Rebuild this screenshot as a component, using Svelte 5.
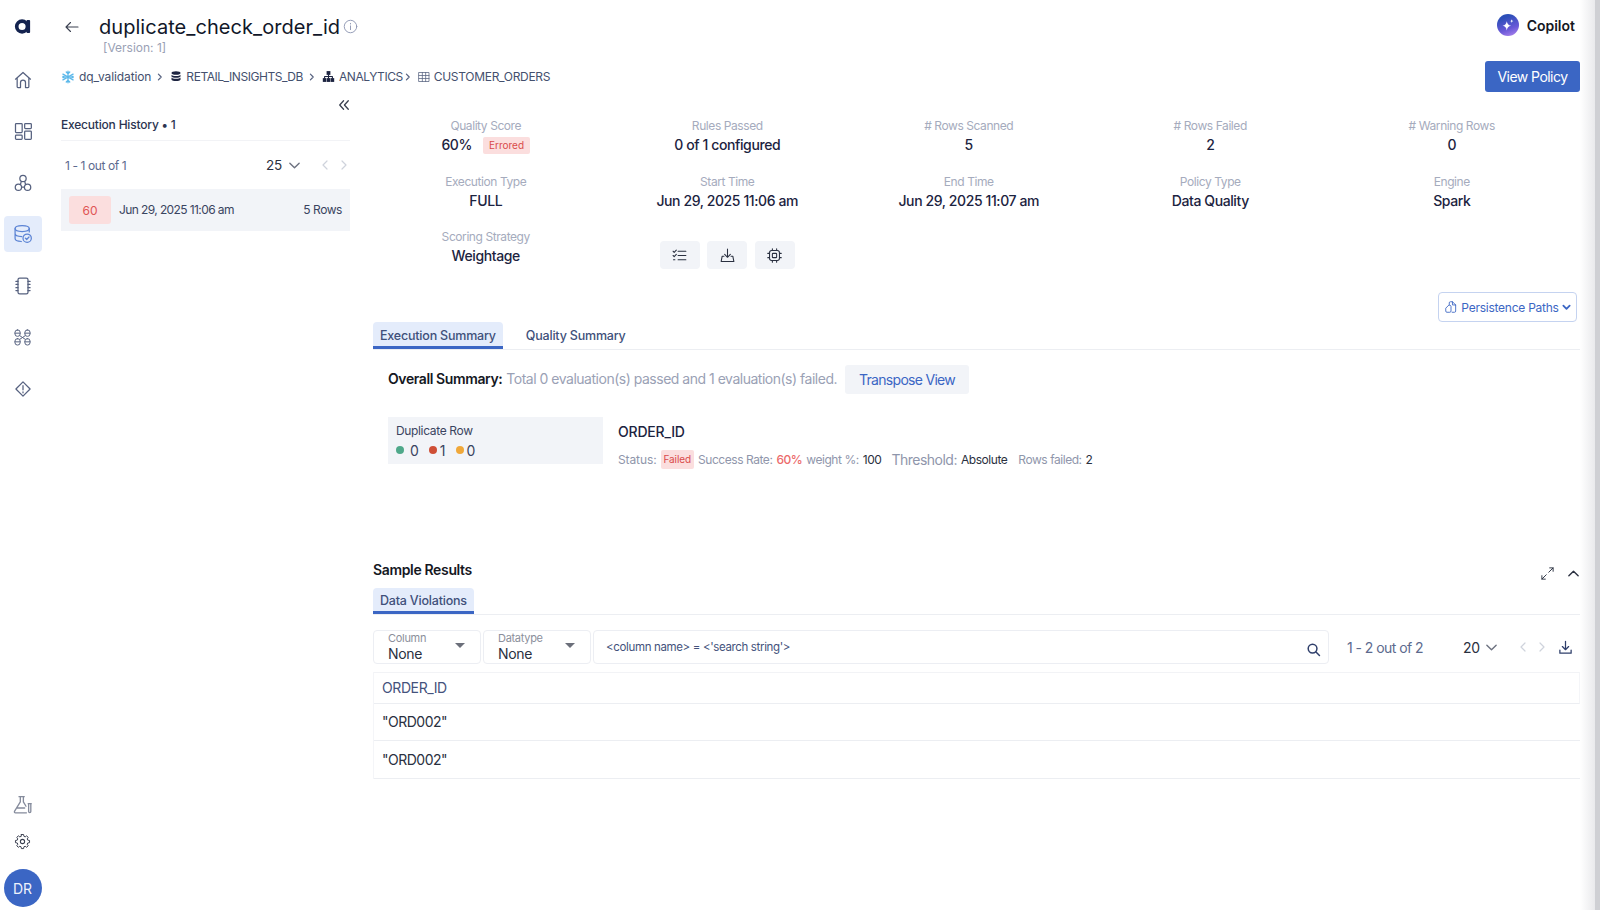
<script>
  const metrics = [
    { label: 'Quality Score', value: '60%', badge: 'Errored' },
    { label: 'Rules Passed', value: '0 of 1 configured' },
    { label: '# Rows Scanned', value: '5' },
    { label: '# Rows Failed', value: '2' },
    { label: '# Warning Rows', value: '0' },
    { label: 'Execution Type', value: 'FULL' },
    { label: 'Start Time', value: 'Jun 29, 2025 11:06 am' },
    { label: 'End Time', value: 'Jun 29, 2025 11:07 am' },
    { label: 'Policy Type', value: 'Data Quality' },
    { label: 'Engine', value: 'Spark' },
    { label: 'Scoring Strategy', value: 'Weightage' }
  ]
  const rows = ['"ORD002"', '"ORD002"']
</script>

<div class="app">
  <nav class="rail">
    <div class="logo">
      <svg viewBox="0.4 0 15 14" width="17" height="15"><circle cx="7.5" cy="7" r="5" fill="none" stroke="#14234f" stroke-width="3.4"/><rect x="11.6" y="1" width="3.4" height="12" rx="0.8" fill="#14234f"/></svg>
    </div>
    <div class="item">
      <svg viewBox="0 0 24 24" width="20" height="20"><path d="M3 11 12 3l9 8M5 9.5V20a1 1 0 0 0 1 1h3v-6a3 3 0 0 1 6 0v6h3a1 1 0 0 0 1-1V9.500M9 21v-6M15 21v-6"/></svg>
    </div>
    <div class="item">
      <svg viewBox="0 0 24 24" width="20" height="20"><rect x="3" y="3" width="8" height="11" rx="1"/><rect x="14" y="3" width="8" height="6" rx="1"/><rect x="3" y="17" width="8" height="5" rx="1"/><rect x="14" y="12" width="8" height="10" rx="1"/></svg>
    </div>
    <div class="item">
      <svg viewBox="0 0 24 24" width="20" height="20"><circle cx="12" cy="6.500" r="3.800"/><circle cx="6.500" cy="17" r="3.800"/><circle cx="17.500" cy="17" r="3.800"/><path d="M10.300 17h3M9 13.500l1-3.500M15 13.500l-1-3.500"/></svg>
    </div>
    <div class="item">
      <div class="active">
        <svg viewBox="0 0 24 24" width="20" height="20"><ellipse cx="11" cy="5.500" rx="8.500" ry="3.500"/><path d="M2.500 5.500v12c0 1.900 3.500 3.400 7.500 3.500M19.500 5.500v4M2.500 11.500c0 1.900 3.500 3.500 8 3.500"/><circle cx="17" cy="17" r="5"/><path d="m14.800 17 1.600 1.600 2.800-3"/></svg>
      </div>
    </div>
    <div class="item">
      <svg viewBox="0 0 24 24" width="20" height="20"><rect x="6" y="2.500" width="12" height="19" rx="2"/><path d="M3.500 6.500H6M3.500 10H6M3.500 14H6M3.500 17.500H6M18 6.500h2.500M18 10h2.500M18 14h2.500M18 17.500h2.500"/></svg>
    </div>
    <div class="item">
      <svg class="thin" viewBox="0 0 24 24" width="19" height="19"><rect x="2.500" y="2.500" width="6.500" height="8" rx="3"/><rect x="15" y="2.500" width="6.500" height="8" rx="3"/><rect x="2.500" y="13.500" width="6.500" height="8" rx="3"/><rect x="15" y="13.500" width="6.500" height="8" rx="3"/><path d="M2.500 6.500H9M15 6.500h6.500M2.500 17.500H9M15 17.500h6.500M9 10l6 4M15 10l-6 4"/></svg>
    </div>
    <div class="item">
      <svg viewBox="0 0 24 24" width="20" height="20"><path d="M12 3.500 20.500 12 12 20.500 3.500 12z" stroke-linejoin="round"/><path d="M12 8v5M12 15.500v1"/></svg>
    </div>

    <div class="rail-bottom">
      <div class="item small">
        <svg viewBox="0 0 24 24" width="21" height="21"><path d="M8 3h6M9.500 3v6L3 19.500c-.7 1.200 0 2 1 2h12.500M13 3v6l3 5M5.500 16h9"/><path d="M18.500 11h3.500M19 11v9a1.200 1.200 0 0 0 2.500 0v-9"/></svg>
      </div>
      <div class="item small dark">
        <svg viewBox="0 0 24 24" width="17" height="17"><circle cx="12" cy="12" r="3"/><path d="M10.300 2.500h3.400l.5 2.800 1.900.8 2.300-1.600 2.400 2.400-1.600 2.300.8 1.900 2.800.5v3.400l-2.800.5-.8 1.900 1.600 2.300-2.400 2.400-2.300-1.600-1.900.8-.5 2.800h-3.400l-.5-2.800-1.900-.8-2.300 1.600-2.400-2.400 1.600-2.300-.8-1.900-2.800-.5v-3.400l2.800-.5.800-1.900-1.600-2.300 2.400-2.400 2.300 1.600 1.900-.8z" stroke-linejoin="round" transform="translate(12 12) scale(.92) translate(-12 -13.200)"/></svg>
      </div>
      <div class="avatar">DR</div>
    </div>
  </nav>

  <main class="main">
    <header class="top">
      <svg class="back" viewBox="0 0 24 24" width="18" height="18"><path d="M20 12H4M10 6l-6 6 6 6"/></svg>
      <div class="title-block">
        <div class="title-line">
          <h1>duplicate_check_order_id</h1>
          <svg viewBox="0 0 24 24" width="15" height="15" class="info"><circle cx="12" cy="12" r="10"/><path d="M12 11v6M12 7v1"/></svg>
        </div>
        <div class="version">[Version: 1]</div>
      </div>
      <div class="copilot">
        <span class="spark">
          <svg viewBox="0 0 24 24" width="17" height="17"><path d="M11 6c.8 4 2 5.500 6 6.500-4 1-5.200 2.500-6 6.500-.8-4-2-5.500-6-6.500 4-1 5.200-2.500 6-6.500zM18 3c.3 1.700.9 2.400 2.500 2.800-1.600.4-2.200 1-2.500 2.700-.3-1.700-.9-2.300-2.500-2.700C17.100 5.400 17.700 4.700 18 3z" fill="#fff"/></svg>
        </span>
        Copilot
      </div>
    </header>

    <div class="crumbs">
      <span class="crumb">
        <svg viewBox="0 0 24 24" width="14" height="14" class="snow"><path d="M12 2v20M3.300 7l17.400 10M3.300 17 20.700 7M9 3.500l3 3 3-3M9 20.500l3-3 3 3M3.200 11l4 1-4 1M20.800 11l-4 1 4 1"/></svg>
        dq_validation
      </span>
      <svg class="sep" viewBox="0 0 10 10" width="8" height="8"><path d="m3 1.500 3.500 3.500L3 8.500"/></svg>
      <span class="crumb caps">
        <svg viewBox="0 0 24 24" width="12" height="13"><ellipse cx="12" cy="5" rx="9" ry="3.500" fill="#1c2340"/><path d="M3 8.500c1 3.500 17 3.500 18 0v3.500c-1 3.500-17 3.500-18 0zM3 14c1 3.500 17 3.500 18 0v4.500c-1 3.500-17 3.500-18 0z" fill="#1c2340"/></svg>
        RETAIL_INSIGHTS_DB
      </span>
      <svg class="sep" viewBox="0 0 10 10" width="8" height="8"><path d="m3 1.500 3.500 3.500L3 8.500"/></svg>
      <span class="crumb caps">
        <svg viewBox="0 0 24 24" width="13" height="13"><rect x="8.500" y="2" width="7" height="7" fill="#1c2340"/><rect x="1.500" y="15" width="6.500" height="7" fill="#1c2340"/><rect x="8.800" y="15" width="6.500" height="7" fill="#1c2340"/><rect x="16" y="15" width="6.500" height="7" fill="#1c2340"/><path d="M12 9v6M4.800 15v-3h14.400v3" stroke="#1c2340" stroke-width="2" fill="none"/></svg>
        ANALYTICS
      </span>
      <svg class="sep tight" viewBox="0 0 10 10" width="8" height="8"><path d="m3 1.500 3.500 3.500L3 8.500"/></svg>
      <span class="crumb caps last">
        <svg viewBox="0 0 24 24" width="12" height="12" class="grid-ic"><rect x="2" y="3" width="20" height="18"/><path d="M2 9h20M2 15h20M8.700 3v18M15.300 3v18"/></svg>
        CUSTOMER_ORDERS
      </span>
      <button class="view-policy">View Policy</button>
    </div>

    <div class="body">
      <aside class="history">
        <div class="collapse">
          <svg viewBox="0 0 14 14" width="12" height="12"><path d="M6.500 2 2 7l4.500 5M12 2 7.500 7l4.500 5"/></svg>
        </div>
        <div class="history-title">Execution History • 1</div>
        <div class="pager">
          <span class="count">1 - 1 out of 1</span>
          <span class="size">25</span>
          <svg class="chev" viewBox="0 0 14 14" width="13" height="13"><path d="m2 4.500 5 5 5-5"/></svg>
          <svg class="arrow" viewBox="0 0 10 14" width="8" height="12"><path d="M7.500 2 2.500 7l5 5"/></svg>
          <svg class="arrow" viewBox="0 0 10 14" width="8" height="12"><path d="m2.500 2 5 5-5 5"/></svg>
        </div>
        <div class="run">
          <span class="run-score">60</span>
          <span class="run-date">Jun 29, 2025 11:06 am</span>
          <span class="run-rows">5 Rows</span>
        </div>
      </aside>

      <section class="content">
        <div class="metrics">
          {#each metrics as m}
            <div class="metric">
              <div class="m-label">{m.label}</div>
              <div class="m-value">
                {m.value}
                {#if m.badge}<span class="errored">{m.badge}</span>{/if}
              </div>
            </div>
          {/each}
          <div class="actions">
            <button class="act" aria-label="Rules">
              <svg viewBox="0 0 24 24" width="17" height="17"><path d="M10 6h11M10 12h11M10 18h11M3 6l1.500 1.500L7.500 4.500M3 12l1.500 1.500 3-3M3.500 18h2"/></svg>
            </button>
            <button class="act" aria-label="Download">
              <svg viewBox="0 0 24 24" width="17" height="17"><path d="M12 3v11M8 10.500l4 4 4-4M7 13H4.500L3 20.500h18L19.500 13H17"/></svg>
            </button>
            <button class="act" aria-label="Engine">
              <svg viewBox="0 0 24 24" width="17" height="17"><rect x="5" y="5" width="14" height="14" rx="3"/><rect x="9" y="9" width="6" height="6" rx="1"/><path d="M9 2.500V5M15 2.500V5M9 19v2.500M15 19v2.500M2.500 9H5M2.500 15H5M19 9h2.500M19 15h2.500"/></svg>
            </button>
          </div>
        </div>

        <div class="persist-row">
          <button class="persist">
            <svg viewBox="0 0 24 24" width="14" height="14"><path d="M9 8V5a2 2 0 0 1 2-2h3.500L20 8.500V19a2 2 0 0 1-2 2h-4M14.500 3v5.500H20M8 9 3 14v5a2 2 0 0 0 2 2h5a2 2 0 0 0 2-2v-8a2 2 0 0 0-2-2z"/></svg>
            Persistence Paths
            <svg class="caret" viewBox="0 0 10 10" width="9" height="9"><path d="m1.500 3 3.500 3.500L8.500 3"/></svg>
          </button>
        </div>

        <div class="tabs">
          <div class="tab on">Execution Summary</div>
          <div class="tab plain">Quality Summary</div>
        </div>

        <div class="summary">
          <span class="s-strong">Overall Summary:</span>
          <span class="s-text">Total 0 evaluation(s) passed and 1 evaluation(s) failed.</span>
          <button class="transpose">Transpose View</button>
        </div>

        <div class="rule">
          <div class="rule-card">
            <div class="rule-name">Duplicate Row</div>
            <div class="dots">
              <span class="dot green"></span><span class="n">0</span>
              <span class="dot red"></span><span class="n">1</span>
              <span class="dot amber"></span><span class="n">0</span>
            </div>
          </div>
          <div class="rule-detail">
            <div class="col-name">ORDER_ID</div>
            <div class="stats">
              <span class="g status">Status:</span>
              <span class="failed">Failed</span>
              <span class="g">Success Rate:</span>
              <span class="pct">60%</span>
              <span class="g">weight %:</span>
              <span class="d">100</span>
              <span class="g big">Threshold:</span>
              <span class="d">Absolute</span>
              <span class="g far">Rows failed:</span>
              <span class="d">2</span>
            </div>
          </div>
        </div>

        <div class="sample-head">
          <span class="sample-title">Sample Results</span>
          <div class="sample-tools">
            <svg viewBox="0 0 24 24" width="15" height="15"><path d="M14 10l7-7M15.500 3H21v5.500M10 14l-7 7M3 15.500V21h5.500"/></svg>
            <svg viewBox="0 0 14 14" width="13" height="13"><path d="m2 9.500 5-5 5 5"/></svg>
          </div>
        </div>
        <div class="tabs small-tabs">
          <div class="tab on">Data Violations</div>
        </div>

        <div class="filters">
          <div class="select">
            <div>
              <div class="s-label">Column</div>
              <div class="s-value">None</div>
            </div>
            <span class="tri"></span>
          </div>
          <div class="select">
            <div>
              <div class="s-label">Datatype</div>
              <div class="s-value">None</div>
            </div>
            <span class="tri"></span>
          </div>
          <div class="search">
            <span>&lt;column name&gt; = &lt;'search string'&gt;</span>
            <svg viewBox="0 0 24 24" width="15" height="15"><circle cx="10.500" cy="10.500" r="7"/><path d="m16 16 5.500 5.500"/></svg>
          </div>
          <span class="r-count">1 - 2 out of 2</span>
          <span class="r-size">20</span>
          <svg class="chev" viewBox="0 0 14 14" width="13" height="13"><path d="m2 4.500 5 5 5-5"/></svg>
          <svg class="arrow first" viewBox="0 0 10 14" width="8" height="12"><path d="M7.500 2 2.500 7l5 5"/></svg>
          <svg class="arrow" viewBox="0 0 10 14" width="8" height="12"><path d="m2.500 2 5 5-5 5"/></svg>
          <svg class="dl" viewBox="0 0 24 24" width="15" height="15"><path d="M12 2v13M7 10.500l5 5 5-5M3 16v5h18v-5"/></svg>
        </div>

        <div class="table">
          <div class="t-head">ORDER_ID</div>
          {#each rows as r}
            <div class="t-row">{r}</div>
          {/each}
        </div>
      </section>
    </div>
  </main>

  <div class="edge"></div>
</div>

<style>
  :global(body) {
    margin: 0;
    background: #fff;
  }

  .app {
    display: flex;
    width: 1600px;
    height: 910px;
    position: relative;
    overflow: hidden;
    font-family: Inter, "Noto Sans", sans-serif;
    color: #1c2340;
  }

  svg {
    display: block;
    flex: none;
    fill: none;
    stroke: currentColor;
    stroke-width: 1.5;
    stroke-linecap: round;
    stroke-linejoin: round;
  }

  svg.thin { stroke-width: 1.25; }

  button {
    font-family: inherit;
    border: none;
    padding: 0;
  }

  /* left rail */
  .rail {
    width: 45px;
    flex: none;
    display: flex;
    flex-direction: column;
    align-items: center;
    color: #56617f;
  }

  .logo {
    height: 53.8px;
    display: flex;
    align-items: center;
    justify-content: center;
  }

  .logo svg { stroke: none; }

  .item {
    height: 51.6px;
    width: 100%;
    display: flex;
    align-items: center;
    justify-content: center;
  }

  .item.small { height: 37px; color: #858b9c; }
  .item.dark { color: #3a4050; }

  .active {
    width: 38px;
    height: 36px;
    border-radius: 4px;
    background: #e4ecfb;
    color: #5b83d4;
    display: flex;
    align-items: center;
    justify-content: center;
  }

  .rail-bottom {
    margin-top: auto;
    padding-bottom: 3px;
    width: 100%;
    display: flex;
    flex-direction: column;
    align-items: center;
  }

  .avatar {
    margin-top: 9.5px;
    width: 38px;
    height: 38px;
    border-radius: 50%;
    background: #3b66c4;
    color: #eef2fb;
    font-size: 14px;
    display: flex;
    align-items: center;
    justify-content: center;
  }

  /* page */
  .main {
    flex: 1;
    min-width: 0;
    padding: 0 20px 0 16px;
    display: flex;
    flex-direction: column;
  }

  .top {
    height: 61px;
    display: flex;
    align-items: flex-start;
    padding-top: 13px;
    box-sizing: border-box;
  }

  .back {
    margin: 5px 0 0 2px;
    color: #3a4050;
  }

  .title-block { margin-left: 18px; }

  .title-line {
    display: flex;
    align-items: center;
    gap: 3px;
    height: 28px;
  }

  h1 {
    margin: 0;
    font-size: 20px;
    font-weight: 400;
    line-height: 28px;
    color: #111729;
    letter-spacing: 0.05px;
  }

  .info { color: #8f98b3; margin-top: -2px; stroke-width: 1.5; }

  .version {
    font-size: 12px;
    line-height: 14px;
    color: #9aa1b5;
    margin-left: 4px;
  }

  .copilot {
    margin-left: auto;
    margin-right: 5px;
    display: flex;
    align-items: center;
    gap: 8px;
    font-size: 14px;
    font-weight: 600;
    color: #15181f;
    height: 24px;
  }

  .spark {
    width: 22px;
    height: 22px;
    border-radius: 50%;
    background: linear-gradient(160deg, #2c4fb8 20%, #6a58d8 65%, #b58af0);
    display: flex;
    align-items: center;
    justify-content: center;
  }

  .spark svg { stroke: none; }

  .crumbs {
    height: 31px;
    display: flex;
    align-items: center;
    font-size: 12px;
    color: #44506e;
  }

  .crumb {
    display: flex;
    align-items: center;
    gap: 4px;
    letter-spacing: -0.1px;
  }

  .crumb.caps { letter-spacing: -0.45px; }
  .crumb.last { letter-spacing: -0.3px; }

  .crumb svg { stroke: none; }
  .crumb .snow { stroke: #5bb8ea; stroke-width: 2.2; }
  .crumb .grid-ic { stroke: #56617f; stroke-width: 1.5; }

  .sep {
    margin: 0 6px 0 5px;
    color: #56617f;
  }

  .sep.tight { margin-left: 1px; }

  .view-policy {
    margin-left: auto;
    width: 95px;
    height: 31px;
    border-radius: 3px;
    background: #3b66c4;
    color: #fff;
    font-size: 14px;
    letter-spacing: -0.55px;
  }

  .body {
    display: flex;
    gap: 15px;
    flex: 1;
    min-height: 0;
  }

  /* execution history */
  .history {
    width: 289px;
    flex: none;
  }

  .collapse {
    height: 26px;
    display: flex;
    align-items: center;
    justify-content: flex-end;
    color: #3a4050;
  }

  .history-title {
    font-size: 12px;
    font-weight: 500;
    line-height: 13px;
    padding-bottom: 9px;
    border-bottom: 1px solid #f2f3f6;
    color: #2b3450;
    letter-spacing: -0.2px;
  }

  .pager {
    height: 48px;
    display: flex;
    align-items: center;
    padding-left: 4px;
  }

  .count {
    font-size: 12px;
    color: #5d6a8e;
    letter-spacing: -0.4px;
  }

  .size {
    font-size: 13.5px;
    margin-left: auto;
    color: #2a3040;
    letter-spacing: -0.2px;
  }

  .chev {
    color: #6d7280;
    margin-left: 6px;
  }

  .arrow {
    color: #cfd3dc;
    margin-left: 11px;
  }

  .pager .chev + .arrow { margin-left: 20px; }

  .pager .arrow:last-child { margin-right: 2px; }

  .run {
    height: 42px;
    background: #f2f4f8;
    display: flex;
    align-items: center;
    padding: 0 8px;
    font-size: 12px;
    color: #3a4460;
  }

  .run-score {
    width: 42px;
    height: 28px;
    border-radius: 3px;
    background: #fbdede;
    color: #e05555;
    display: flex;
    align-items: center;
    justify-content: center;
  }

  .run-date {
    margin: 0 0 2px 8px;
    letter-spacing: -0.6px;
  }

  .run-rows {
    margin: 0 0 2px auto;
    letter-spacing: -0.45px;
  }

  /* run details */
  .content {
    flex: 1;
    min-width: 0;
  }

  .metrics {
    display: grid;
    grid-template-columns: repeat(5, 241.5px);
    row-gap: 16.5px;
    padding-top: 25px;
    text-align: center;
  }

  .m-label {
    font-size: 12px;
    line-height: 17px;
    color: #a5abbd;
    letter-spacing: -0.42px;
  }

  .m-value {
    font-size: 14px;
    font-weight: 500;
    line-height: 22px;
    display: flex;
    align-items: center;
    justify-content: center;
    gap: 11px;
    letter-spacing: -0.4px;
  }

  .errored {
    font-size: 10px;
    font-weight: 400;
    line-height: 17px;
    padding: 0 6px;
    border-radius: 2px;
    background: #fbdede;
    color: #d94a4a;
    letter-spacing: 0;
  }

  .actions {
    display: flex;
    justify-content: center;
    gap: 7.5px;
    margin-top: 13px;
  }

  .act {
    width: 40px;
    height: 28px;
    border-radius: 4px;
    background: #f2f4f8;
    color: #2a3040;
    display: flex;
    align-items: center;
    justify-content: center;
  }

  .persist-row {
    display: flex;
    justify-content: flex-end;
    margin-top: 23px;
    padding-right: 3px;
  }

  .persist {
    width: 139px;
    height: 30px;
    border: 1px solid #c5d3f0;
    border-radius: 4px;
    background: #fff;
    color: #3b66c4;
    font-size: 12px;
    display: flex;
    align-items: center;
    justify-content: center;
    gap: 3px;
    letter-spacing: -0.25px;
  }

  .caret { stroke-width: 2; }

  .tabs {
    margin-left: 8px;
    display: flex;
    border-bottom: 1px solid #eceef2;
    height: 27px;
  }

  .tab {
    height: 27px;
    box-sizing: border-box;
    font-size: 12.5px;
    font-weight: 500;
    color: #40507a;
    padding: 0 7px;
    display: flex;
    align-items: center;
    white-space: nowrap;
    letter-spacing: -0.2px;
  }

  .tab.on {
    background: #e4ecfb;
    border-radius: 4px 4px 0 0;
    border-bottom: 3px solid #3b66c4;
    padding-top: 2px;
  }

  .tab.plain { margin-left: 16px; }

  .summary {
    margin: 15px 0 0 23px;
    height: 29px;
    display: flex;
    align-items: center;
    font-size: 14px;
  }

  .s-strong {
    font-weight: 600;
    color: #15181f;
    letter-spacing: -0.4px;
    margin-bottom: 2px;
  }

  .s-text {
    color: #9aa1b5;
    margin: 0 0 2px 4px;
    letter-spacing: -0.49px;
  }

  .transpose {
    margin-left: 8px;
    width: 124px;
    height: 29px;
    border-radius: 3px;
    background: #f2f4f8;
    color: #3b66c4;
    font-size: 14px;
    letter-spacing: -0.7px;
  }

  .rule {
    margin: 23px 0 0 23px;
    display: flex;
    height: 47px;
  }

  .rule-card {
    width: 215px;
    height: 47px;
    box-sizing: border-box;
    background: #f2f4f8;
    padding: 5px 8px;
  }

  .rule-name {
    font-size: 12px;
    line-height: 17px;
    color: #3a4460;
    letter-spacing: -0.35px;
  }

  .dots {
    display: flex;
    align-items: center;
    height: 20px;
    margin-top: 1px;
    font-size: 14px;
    color: #3a4460;
  }

  .dot {
    width: 8px;
    height: 8px;
    border-radius: 50%;
    margin-right: 3px;
  }

  .green { background: #4fa88a; margin-right: 6px; }
  .red { background: #cf4f36; margin-left: 10px; }
  .amber { background: #f0a83a; margin-left: 10px; }

  .rule-detail { margin-left: 15px; }

  .col-name {
    font-size: 14px;
    font-weight: 500;
    line-height: 20px;
    margin-top: 5px;
    color: #1c2340;
    letter-spacing: -0.2px;
  }

  .stats {
    display: flex;
    align-items: center;
    height: 20px;
    margin-top: 7px;
    font-size: 12px;
    gap: 4px;
    letter-spacing: -0.45px;
  }

  .g { color: #8f96ab; }
  .g.status { letter-spacing: -0.1px; }
  .g.big { font-size: 14px; margin-left: 6px; letter-spacing: -0.5px; }
  .g.far { margin-left: 7px; }
  .d { color: #2a3040; }

  .failed {
    font-size: 10px;
    line-height: 19px;
    padding: 0 3px;
    border-radius: 2px;
    background: #fbdede;
    color: #d94a4a;
    letter-spacing: -0.1px;
  }

  .pct { color: #ec6a6a; font-weight: 500; }

  .sample-head {
    margin: 96px 0 0 8px;
    height: 28px;
    display: flex;
    justify-content: space-between;
    align-items: flex-start;
  }

  .sample-title {
    font-size: 14px;
    font-weight: 600;
    line-height: 20px;
    color: #15181f;
    letter-spacing: -0.35px;
  }

  .sample-tools {
    display: flex;
    align-items: center;
    gap: 12px;
    margin-top: 6px;
    color: #2a3040;
  }

  .small-tabs { height: 26px; }
  .small-tabs .tab { height: 26px; }

  .filters {
    margin: 15px 0 0 8px;
    height: 34px;
    display: flex;
    align-items: center;
  }

  .select {
    width: 107.5px;
    height: 34px;
    box-sizing: border-box;
    border: 1px solid #eceef3;
    border-radius: 4px;
    padding: 0 15px 0 14px;
    margin-right: 2.5px;
    display: flex;
    align-items: center;
    justify-content: space-between;
    flex: none;
  }

  .s-label {
    font-size: 11px;
    line-height: 13px;
    color: #8b8f9b;
    letter-spacing: -0.3px;
  }

  .s-value {
    font-size: 14px;
    line-height: 17px;
    color: #2a3040;
    letter-spacing: -0.3px;
  }

  .tri {
    width: 0;
    height: 0;
    border-left: 5px solid transparent;
    border-right: 5px solid transparent;
    border-top: 5px solid #6b6f7a;
    margin-top: -3px;
  }

  .search {
    width: 736px;
    height: 34px;
    box-sizing: border-box;
    border: 1px solid #eceef3;
    border-radius: 4px;
    padding: 0 7px 0 12px;
    flex: none;
    display: flex;
    align-items: center;
    justify-content: space-between;
    font-size: 11.5px;
    color: #44527c;
    letter-spacing: -0.35px;
  }

  .search svg { color: #2f3f6b; stroke-width: 2.4; margin-top: 5px; }

  .r-count {
    margin-left: 18px;
    font-size: 14px;
    color: #5d6a8e;
    letter-spacing: -0.55px;
    white-space: nowrap;
  }

  .r-size {
    margin-left: auto;
    font-size: 14px;
    color: #2a3040;
    letter-spacing: -0.2px;
  }

  .filters .chev { margin-left: 5px; }
  .filters .arrow.first { margin-left: 21px; }

  .dl {
    color: #2f3f6b;
    margin: 0 7px 0 12px;
    stroke-width: 2;
  }

  .table {
    margin: 8px 0 0 8px;
    border-left: 1px solid #f4f5f8;
    font-size: 14px;
  }

  .t-head {
    height: 31.5px;
    box-sizing: border-box;
    padding-left: 8px;
    display: flex;
    align-items: center;
    color: #44527c;
    border-top: 1px solid #f2f3f6;
    border-bottom: 1px solid #eceef2;
    border-right: 1px solid #f4f5f8;
    letter-spacing: -0.4px;
  }

  .t-row {
    height: 37.5px;
    box-sizing: border-box;
    padding-left: 8px;
    display: flex;
    align-items: center;
    color: #2a3040;
    border-bottom: 1px solid #eceef2;
    letter-spacing: -0.5px;
  }

  /* page scrollbar shadow over the right edge */
  .edge {
    position: absolute;
    top: 0;
    bottom: 0;
    right: 0;
    width: 20px;
    box-sizing: border-box;
    border-right: 5px solid #cfd0d4;
    background: linear-gradient(90deg, rgba(0, 0, 0, 0), rgba(40, 45, 70, 0.1));
    pointer-events: none;
  }
</style>
